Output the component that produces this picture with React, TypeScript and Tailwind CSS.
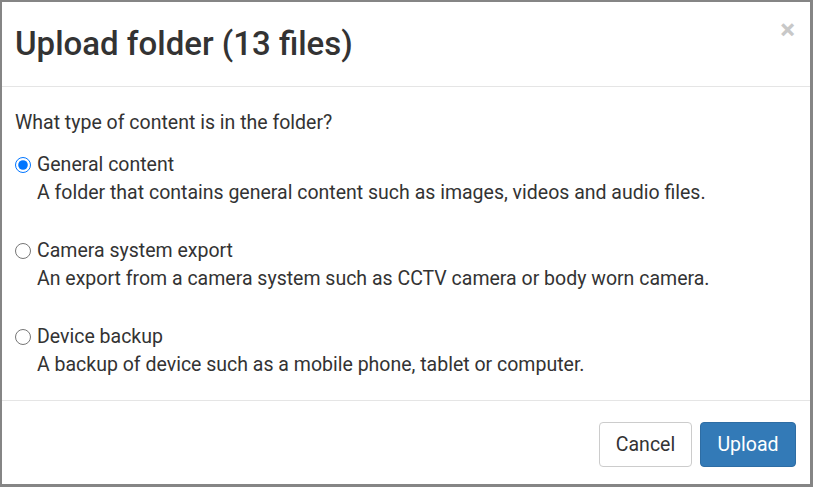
import React, { useState } from "react";

const options = [
  {
    id: "general",
    label: "General content",
    description:
      "A folder that contains general content such as images, videos and audio files.",
  },
  {
    id: "camera",
    label: "Camera system export",
    description:
      "An export from a camera system such as CCTV camera or body worn camera.",
  },
  {
    id: "device",
    label: "Device backup",
    description:
      "A backup of device such as a mobile phone, tablet or computer.",
  },
];

const App: React.FC = () => {
  const [selected, setSelected] = useState("general");

  return (
    <div
      className="w-[813px] h-[487px] bg-white border-l-2 border-t-2 border-r-[3px] border-b-[3px] border-[#858585] flex flex-col text-[#333]"
      style={{ fontFamily: "Roboto, 'Liberation Sans', sans-serif" }}
    >
      {/* header */}
      <div className="h-[85px] shrink-0 flex items-center justify-between pl-[13px] pr-[15px] border-b border-[#e5e5e5]">
        <h1 className="text-[33px] font-medium leading-none text-[#333] -mt-[2px]">
          Upload folder (13 files)
        </h1>
        <button
          type="button"
          className="self-start mt-[14px] text-[28px] font-bold leading-none text-[#c8c8c8]"
        >
          ×
        </button>
      </div>

      {/* body */}
      <div className="flex-1 pl-[13px] pr-4 pt-[22px] text-[19.5px] leading-[28px]">
        <p className="mb-[14px]">What type of content is in the folder?</p>
        <div className="flex flex-col gap-[30px]">
          {options.map((opt) => (
            <label key={opt.id} className="flex flex-col cursor-pointer">
              <span className="flex items-center gap-[6px]">
                <input
                  type="radio"
                  name="contentType"
                  checked={selected === opt.id}
                  onChange={() => setSelected(opt.id)}
                  className="w-[16px] h-[16px] m-0 accent-[#0075ff]"
                />
                {opt.label}
              </span>
              <span className="pl-[22px]">{opt.description}</span>
            </label>
          ))}
        </div>
      </div>

      {/* footer */}
      <div className="h-[84px] shrink-0 border-t border-[#e5e5e5] flex items-center justify-end gap-2 pr-[14px] pt-[4px]">
        <button
          type="button"
          className="h-[45px] w-[93px] rounded-[4px] border border-[#ccc] bg-white text-[19.5px] text-[#333]"
        >
          Cancel
        </button>
        <button
          type="button"
          className="h-[45px] w-[96px] rounded-[4px] border border-[#2e6da4] bg-[#337ab7] text-[19.5px] text-white"
        >
          Upload
        </button>
      </div>
    </div>
  );
};

export default App;
